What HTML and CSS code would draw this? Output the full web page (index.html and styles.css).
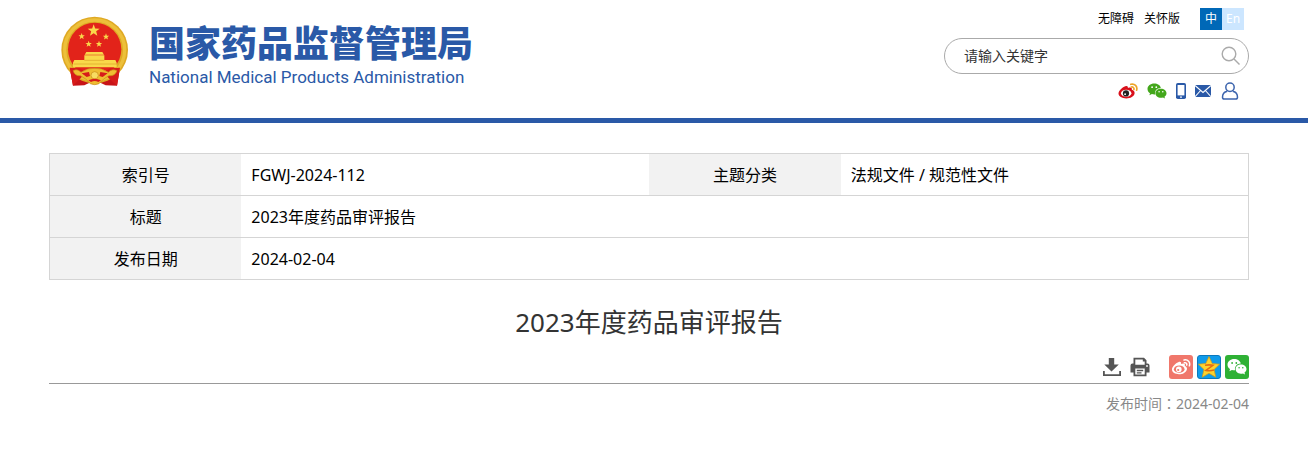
FILE: index.html
```html
<!DOCTYPE html>
<html lang="zh-CN">
<head>
    <meta charset="UTF-8">
    <meta name="viewport" content="width=device-width, initial-scale=1.0">
    <title>2023年度药品审评报告</title>
    <link rel="stylesheet" href="styles.css">
</head>
<body>
    <!-- Header -->
    <header class="header">
        <div class="container header-inner">
            <a class="logo" href="#">
                <svg class="emblem" viewBox="36 33 204 210" aria-hidden="true">
                    <path fill="#c81418" d="M62 188 L72 242 L106 241 L138 226 L170 241 L204 242 L213 188 Z"/>
                    <circle cx="137" cy="135" r="100" fill="#dfa924"/>
                    <circle cx="137" cy="135" r="90" fill="none" stroke="#edc03a" stroke-width="10"/>
                    <circle cx="137" cy="133" r="80" fill="#e2231a"/>
                    <g fill="#f9d84a">
                        <path d="M134 58 L138.500 70.500 L152 71 L141.500 79 L145 92 L134 84.500 L123 92 L126.500 79 L116 71 L129.500 70.500 Z"/>
                        <path d="M98 84 l2.500 7 7 0 -5.500 4.500 2 7 -6 -4 -6 4 2 -7 -5.500 -4.500 7 0 Z"/>
                        <path d="M171 85 l2.500 7 7 0 -5.500 4.500 2 7 -6 -4 -6 4 2 -7 -5.500 -4.500 7 0 Z"/>
                        <path d="M119 107 l2.500 7 7 0 -5.500 4.500 2 7 -6 -4 -6 4 2 -7 -5.500 -4.500 7 0 Z"/>
                        <path d="M150 107 l2.500 7 7 0 -5.500 4.500 2 7 -6 -4 -6 4 2 -7 -5.500 -4.500 7 0 Z"/>
                        <path d="M112 141 h48 l5 8 h-58 Z M106 151 h60 v14 h33 l4 8 v14 H72 v-14 l4 -8 h30 Z"/>
                    </g>
                    <path stroke="#dba229" stroke-width="2" d="M106 166 h60 M74 177 h128"/>
                    <path fill="#d71b1a" d="M62 188 L92 190 L112 202 L96 218 L72 242 Z M213 188 L184 190 L162 202 L178 218 L204 242 Z"/>
                    <path fill="#efbd32" stroke="#c98a14" stroke-width="2" d="M72 197 Q86 190 96 202 Q116 188 137 190 Q158 188 178 202 Q188 190 204 197 Q198 214 180 212 L164 222 L150 236 Q137 242 124 236 L110 222 L94 212 Q78 214 72 197 Z"/>
                    <circle cx="137" cy="211" r="11" fill="#f8dc62" stroke="#c98a14" stroke-width="2"/>
                    <path fill="#d71b1a" d="M98 205 L120 201 L123 213 L113 216 Z M176 205 L154 201 L151 213 L161 216 Z M118 226 Q137 216 156 226 L148 231 Q137 225 126 231 Z"/>
                </svg>
                <span class="logo-text">
                    <span class="logo-cn">国家药品监督管理局</span>
                    <span class="logo-en" lang="en">National Medical Products Administration</span>
                </span>
            </a>

            <div class="tools">
                <nav class="top-links">
                    <a href="#">无障碍</a>
                    <a href="#">关怀版</a>
                    <span class="lang">
                        <a class="lang-cn" href="#">中</a>
                        <a class="lang-en" href="#">En</a>
                    </span>
                </nav>
                <form class="search">
                    <input type="text" placeholder="请输入关键字" aria-label="请输入关键字">
                    <button type="button" aria-label="搜索">
                        <svg width="20" height="20" viewBox="0 0 20 20" fill="none" stroke="#aaa" stroke-width="1.4">
                            <circle cx="8" cy="8" r="6.8"/>
                            <path d="M13 13 L18.5 18.5"/>
                        </svg>
                    </button>
                </form>
                <nav class="social">
                    <a href="#" aria-label="微博">
                        <svg width="20" height="16" viewBox="0 0 20 16">
                            <path fill="#d9101b" d="M7.4 3.2 C9 2.6 10.2 3.2 9.9 5 C12.5 4 14.3 4.6 13.8 6.8 C15.6 7.4 16.8 8.3 16.6 10.2 C16.2 13.4 12.4 15.4 8.3 15.4 C4 15.4 .5 13.6 .5 10.6 C.5 8 3.8 4.5 7.4 3.2 Z"/>
                            <ellipse cx="8.2" cy="10.2" rx="5.2" ry="3.5" fill="#fff"/>
                            <circle cx="8" cy="10.4" r="3.1" fill="#222"/>
                            <circle cx="7.1" cy="11.2" r=".9" fill="#fff"/>
                            <path fill="none" stroke="#eda52a" stroke-width="1.7" stroke-linecap="round" d="M12.8 1.3 C16.6 .2 19.8 3.3 18.6 7.2 M13.3 4 C15 3.6 16.3 4.9 15.9 6.5"/>
                        </svg>
                    </a>
                    <a href="#" aria-label="微信">
                        <svg width="20" height="16" viewBox="0 0 20 16">
                            <path fill="#43a71b" d="M7.2 .5 C3.4 .5 .5 2.9 .5 6 C.5 7.8 1.5 9.3 3 10.3 L2.4 12.3 L4.9 11.1 C6 11.4 7.2 11.5 8.1 11.4 C7.3 7.6 10.3 4.8 13.8 4.9 C13.3 2.3 10.5 .5 7.2 .5 Z"/>
                            <path fill="#43a71b" d="M13.9 5.7 C10.8 5.7 8.4 7.7 8.4 10.2 C8.4 12.7 10.8 14.8 13.9 14.8 C14.7 14.8 15.4 14.7 16 14.5 L18 15.5 L17.5 13.7 C18.8 12.8 19.5 11.6 19.5 10.2 C19.5 7.7 17 5.7 13.9 5.7 Z"/>
                            <g fill="#fff"><circle cx="5.1" cy="4.2" r=".9"/><circle cx="9.3" cy="4.2" r=".9"/><circle cx="12.1" cy="8.8" r=".8"/><circle cx="15.8" cy="8.8" r=".8"/></g>
                        </svg>
                    </a>
                    <a href="#" aria-label="手机版">
                        <svg width="10" height="16" viewBox="0 0 10 16">
                            <rect width="10" height="16" rx="1.8" fill="#2a59a7"/>
                            <rect x="1.6" y="2" width="6.8" height="10.4" fill="#fff"/>
                            <circle cx="5" cy="14.1" r=".9" fill="#fff"/>
                        </svg>
                    </a>
                    <a href="#" aria-label="邮箱">
                        <svg width="16" height="12" viewBox="0 0 16 12">
                            <rect width="16" height="12" fill="#2a59a7"/>
                            <path fill="none" stroke="#fff" stroke-width="1.1" d="M0 .4 L8 7.4 L16 .4 M0 11.7 L5.6 5.5 M16 11.7 L10.4 5.5"/>
                        </svg>
                    </a>
                    <a class="user" href="#" aria-label="用户登录">
                        <svg width="18" height="18" viewBox="0 0 18 18" fill="none" stroke="#3c64ad" stroke-width="1.5">
                            <circle cx="9" cy="5.2" r="4.2"/>
                            <path d="M6.2 9.3 C3 10 1.5 12.4 1.5 15.2 Q1.5 17 3.4 17 H14.6 Q16.5 17 16.5 15.2 C16.5 12.4 15 10 11.8 9.3"/>
                        </svg>
                    </a>
                </nav>
            </div>
        </div>
    </header>

    <!-- Document -->
    <main class="container">
        <table class="info">
            <colgroup>
                <col class="col-label"><col class="col-value"><col class="col-label"><col class="col-value">
            </colgroup>
            <tr>
                <th scope="row">索引号</th>
                <td>FGWJ-2024-112</td>
                <th scope="row">主题分类</th>
                <td>法规文件 / 规范性文件</td>
            </tr>
            <tr>
                <th scope="row">标题</th>
                <td colspan="3">2023年度药品审评报告</td>
            </tr>
            <tr>
                <th scope="row">发布日期</th>
                <td colspan="3">2024-02-04</td>
            </tr>
        </table>

        <h1>2023年度药品审评报告</h1>

        <div class="actions">
            <button type="button" class="download" aria-label="下载">
                <svg width="20" height="20" viewBox="0 0 20 20" fill="#555">
                    <path d="M6.8 1 H12.2 V7.5 H16.8 L9.5 14.5 L2.3 7.5 H6.8 Z"/>
                    <path d="M1 14 H2.8 V17.2 H17.2 V14 H19 V19 H1 Z"/>
                </svg>
            </button>
            <button type="button" class="print" aria-label="打印">
                <svg width="20" height="20" viewBox="0 0 20 20">
                    <path fill="#555" fill-rule="evenodd" d="M3.5 .8 H14 L16.5 3.3 V6.5 H17.5 Q19.5 6.5 19.5 8.5 V15.5 H16.5 V19.3 H3.5 V15.5 H.5 V8.5 Q.5 6.5 2.5 6.5 H3.5 Z M5.3 2.6 V7.8 H14.7 V4.6 H12.8 V2.6 Z M5.3 11.5 V17.6 H14.7 V11.5 Z"/>
                    <path stroke="#555" stroke-width="1.3" d="M6.8 13.5 H13.2 M6.8 15.8 H11.5"/>
                    <circle cx="17" cy="9" r=".9" fill="#fff"/>
                </svg>
            </button>
            <a class="share weibo" href="#" aria-label="分享到微博">
                <svg width="20" height="18" viewBox="0 0 20 18">
                    <path fill="#fff" d="M7.3 4.2 C9 3.4 10.6 4 10 6 C12.6 4.9 14.5 5.6 13.8 7.9 C15.6 8.5 16.3 9.8 15.9 11.4 C15.1 14.4 11.7 16.3 8 16.3 C4.1 16.3 1 14.5 1 11.6 C1 8.9 4.1 5.5 7.3 4.2 Z"/>
                    <ellipse cx="8.2" cy="11.2" rx="5.3" ry="3.7" fill="#f0776b"/>
                    <circle cx="7.8" cy="11.4" r="2.8" fill="#fff"/>
                    <circle cx="7.2" cy="12" r="1.1" fill="#f0776b"/>
                    <path fill="none" stroke="#fff" stroke-width="1.5" stroke-linecap="round" d="M13 2 C16.8 1 19.6 4.3 18.4 7.8 M13.4 4.8 C15 4.4 16.2 5.6 15.7 7.1"/>
                </svg>
            </a>
            <a class="share qzone" href="#" aria-label="分享到QQ空间">
                <svg width="22" height="22" viewBox="0 0 22 22">
                    <path fill="#fdd32f" stroke="#d99b10" stroke-width=".7" d="M11 .5 L14.2 7.5 L21.6 8.2 L16.1 13.4 L17.8 21.2 L11 17.3 L4.200 21.200 L5.900 13.400 L.4 8.200 L7.800 7.500 Z"/>
                    <path fill="none" stroke="#e36a12" stroke-width="1.6" d="M7 9.3 Q11 8.5 15 9.3 L8 14.4 Q12 15.2 16 14.1"/>
                </svg>
            </a>
            <a class="share wechat" href="#" aria-label="分享到微信">
                <svg width="20" height="18" viewBox="0 0 20 18">
                    <path fill="#fff" d="M7.2 1 C3.4 1 .5 3.5 .5 6.7 C.5 8.6 1.5 10.1 3 11.1 L2.4 13.2 L4.9 11.9 C6 12.2 7.2 12.3 8.1 12.2 C7.3 8.3 10.3 5.4 13.8 5.5 C13.3 2.9 10.5 1 7.2 1 Z"/>
                    <path fill="#fff" d="M13.9 6.4 C10.8 6.4 8.6 8.5 8.6 11 C8.6 13.6 10.9 15.7 13.9 15.7 C14.7 15.7 15.4 15.6 16 15.4 L18 16.5 L17.5 14.6 C18.8 13.7 19.5 12.4 19.5 11 C19.5 8.5 17 6.4 13.9 6.4 Z"/>
                    <g fill="#2fb135"><circle cx="5.1" cy="5" r=".9"/><circle cx="9.3" cy="5" r=".9"/><circle cx="12.1" cy="9.7" r=".8"/><circle cx="15.8" cy="9.7" r=".8"/></g>
                </svg>
            </a>
        </div>
        <p class="publish-time">发布时间<span class="colon" lang="zh-TW">：</span>2024-02-04</p>
    </main>
</body>
</html>
```
FILE: styles.css
```css
* {
    box-sizing: border-box;
}

body {
    margin: 0;
    font-family: "Noto Sans", "Noto Sans CJK SC", sans-serif;
    font-size: 16px;
    color: #000;
    background-color: #fff;
}

a {
    color: inherit;
    text-decoration: none;
}

svg {
    display: block;
}

button {
    padding: 0;
    border: none;
    background: none;
    cursor: pointer;
}

.container {
    max-width: 1308px;
    margin: 0 auto;
    padding: 0 59px 0 49px;
}

/* Header */
.header {
    border-bottom: 5px solid #2a59a7;
}

.header-inner {
    display: flex;
    justify-content: space-between;
    align-items: flex-start;
    padding-bottom: 18px;
}

.logo {
    display: flex;
    gap: 20px;
    padding: 16px 0 0 12px;
    color: #2a59a7;
}

.emblem {
    width: 68px;
    height: 70px;
}

.logo-text {
    display: flex;
    flex-direction: column;
    padding-top: 8px;
    white-space: nowrap;
}

.logo-cn {
    font-size: 36px;
    font-weight: 900;
    line-height: 40px;
}

.logo-en {
    font-family: Roboto, sans-serif;
    font-size: 17px;
    line-height: 26px;
}

.tools {
    width: 305px;
    padding-top: 8px;
}

.top-links {
    display: flex;
    justify-content: flex-end;
    gap: 10px;
    padding-right: 5px;
    font-size: 12px;
    line-height: 22px;
}

.lang {
    display: flex;
    margin-left: 10px;
    color: #fff;
    text-align: center;
}

.lang a {
    width: 22px;
}

.lang-cn {
    background-color: #0068b7;
}

.lang-en {
    background-color: #cce6ff;
}

.search {
    display: flex;
    align-items: center;
    height: 36px;
    margin-top: 8px;
    padding: 0 7px 0 19px;
    border: 1px solid #aaa;
    border-radius: 18px;
}

.search input {
    flex: 1;
    min-width: 0;
    padding: 0 0 2px;
    border: none;
    outline: none;
    background: none;
    font-family: inherit;
    font-size: 14px;
    color: #333;
}

.search input::placeholder {
    color: #333;
    opacity: 1;
}

.social {
    display: flex;
    justify-content: flex-end;
    align-items: center;
    gap: 9px;
    margin-top: 8px;
    padding-right: 10px;
}

.social .user {
    margin-left: 1px;
}

/* Info table */
.info {
    width: 100%;
    margin-top: 30px;
    border: 1px solid #d5d5d5;
    border-collapse: collapse;
    table-layout: fixed;
}

.col-label {
    width: 16%;
}

.col-value {
    width: 34%;
}

.info tr {
    height: 42px;
    border-bottom: 1px solid #d5d5d5;
}

.info th,
.info td {
    padding: 0 10px;
    line-height: 24px;
    font-weight: normal;
}

.info th {
    background-color: #f2f2f2;
    text-align: center;
}

h1 {
    margin: 22px 0 0;
    font-size: 26px;
    font-weight: normal;
    line-height: 40px;
    text-align: center;
    color: #333;
}

/* Download, print and share */
.actions {
    display: flex;
    justify-content: flex-end;
    align-items: center;
    gap: 4px;
    margin-top: 13px;
    padding-bottom: 4px;
    border-bottom: 1px solid #999;
}

.print {
    margin: 0 15px 0 4px;
}

.share {
    display: flex;
    justify-content: center;
    align-items: center;
    width: 24px;
    height: 24px;
    border-radius: 3px;
}

.weibo {
    background-color: #f0776b;
}

.qzone {
    background-color: #109bea;
    border: 1px solid #0b78bd;
}

.wechat {
    background-color: #2fb135;
}

.publish-time {
    margin: 7px 0 0;
    font-size: 14px;
    line-height: 24px;
    text-align: right;
    color: #888;
}

.colon {
    font-family: "Noto Sans CJK TC", sans-serif;
}
```
